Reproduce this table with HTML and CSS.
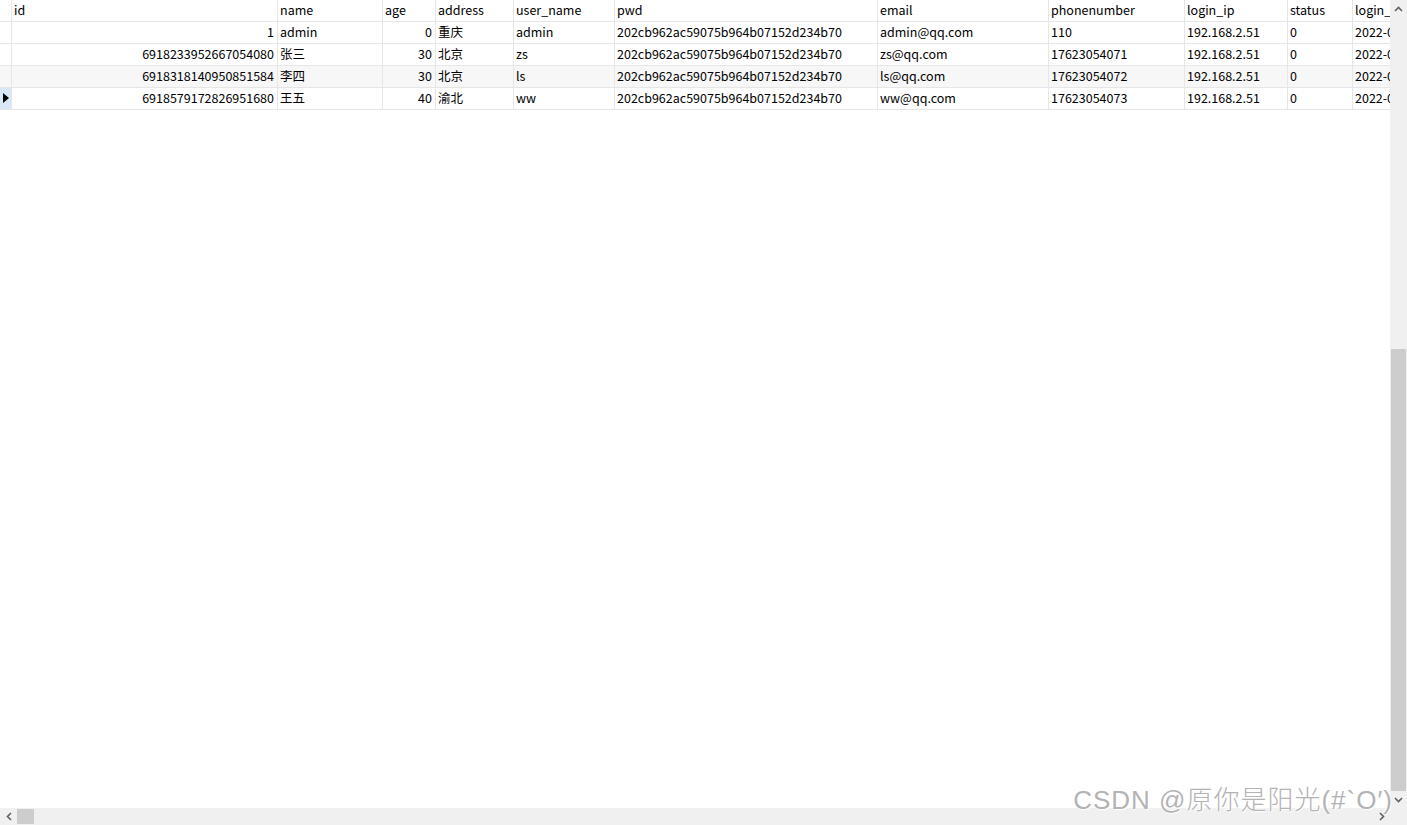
FILE: index.html
```html
<!DOCTYPE html>
<html>
<head>
<meta charset="utf-8">
<link rel="stylesheet" href="styles.css">
</head>
<body>
<div class="window">
  <div class="grid">
    <div class="row head">
      <div class="c ind"></div>
      <div class="c id">id</div>
      <div class="c name">name</div>
      <div class="c age">age</div>
      <div class="c addr">address</div>
      <div class="c uname">user_name</div>
      <div class="c pwd">pwd</div>
      <div class="c email">email</div>
      <div class="c phone">phonenumber</div>
      <div class="c ip">login_ip</div>
      <div class="c status">status</div>
      <div class="c last">login_</div>
    </div>
    <div class="row">
      <div class="c ind"></div>
      <div class="c id num">1</div>
      <div class="c name">admin</div>
      <div class="c age num">0</div>
      <div class="c addr">重庆</div>
      <div class="c uname">admin</div>
      <div class="c pwd">202cb962ac59075b964b07152d234b70</div>
      <div class="c email">admin@qq.com</div>
      <div class="c phone">110</div>
      <div class="c ip">192.168.2.51</div>
      <div class="c status">0</div>
      <div class="c last">2022-0</div>
    </div>
    <div class="row">
      <div class="c ind"></div>
      <div class="c id num">6918233952667054080</div>
      <div class="c name">张三</div>
      <div class="c age num">30</div>
      <div class="c addr">北京</div>
      <div class="c uname">zs</div>
      <div class="c pwd">202cb962ac59075b964b07152d234b70</div>
      <div class="c email">zs@qq.com</div>
      <div class="c phone">17623054071</div>
      <div class="c ip">192.168.2.51</div>
      <div class="c status">0</div>
      <div class="c last">2022-0</div>
    </div>
    <div class="row alt">
      <div class="c ind"></div>
      <div class="c id num">6918318140950851584</div>
      <div class="c name">李四</div>
      <div class="c age num">30</div>
      <div class="c addr">北京</div>
      <div class="c uname">ls</div>
      <div class="c pwd">202cb962ac59075b964b07152d234b70</div>
      <div class="c email">ls@qq.com</div>
      <div class="c phone">17623054072</div>
      <div class="c ip">192.168.2.51</div>
      <div class="c status">0</div>
      <div class="c last">2022-0</div>
    </div>
    <div class="row">
      <div class="c ind cur"><span class="tri"></span></div>
      <div class="c id num">6918579172826951680</div>
      <div class="c name">王五</div>
      <div class="c age num">40</div>
      <div class="c addr">渝北</div>
      <div class="c uname">ww</div>
      <div class="c pwd">202cb962ac59075b964b07152d234b70</div>
      <div class="c email">ww@qq.com</div>
      <div class="c phone">17623054073</div>
      <div class="c ip">192.168.2.51</div>
      <div class="c status">0</div>
      <div class="c last">2022-0</div>
    </div>
  </div>
  <div class="vscroll">
    <div class="arrow up"><svg width="9" height="6" viewBox="0 0 9 6"><path d="M1 5 L4.5 1.5 L8 5" fill="none" stroke="#606060" stroke-width="1.6"/></svg></div>
    <div class="vtrack"><div class="vthumb"></div></div>
    <div class="arrow down"><svg width="9" height="6" viewBox="0 0 9 6"><path d="M1 1 L4.5 4.5 L8 1" fill="none" stroke="#606060" stroke-width="1.6"/></svg></div>
  </div>
  <div class="hscroll">
    <div class="arrow left"><svg width="6" height="9" viewBox="0 0 6 9"><path d="M5 1 L1.5 4.5 L5 8" fill="none" stroke="#606060" stroke-width="1.6"/></svg></div>
    <div class="hthumb"></div>
    <div class="htrack"></div>
    <div class="arrow right"><svg width="6" height="9" viewBox="0 0 6 9"><path d="M1 1 L4.5 4.5 L1 8" fill="none" stroke="#606060" stroke-width="1.6"/></svg></div>
  </div>
  <div class="corner"></div>
  <div class="watermark">CSDN @原你是阳光(#`O′)</div>
</div>
</body>
</html>
```
FILE: styles.css
```css
html, body {
  margin: 0;
  padding: 0;
  background: #ffffff;
}
.window {
  position: relative;
  width: 1407px;
  height: 825px;
  display: grid;
  grid-template-columns: 1390px 17px;
  grid-template-rows: 808px 17px;
  overflow: hidden;
  font-family: "Noto Sans CJK SC", "Microsoft YaHei", sans-serif;
  font-size: 12.5px;
  color: #000;
}
.grid {
  overflow: hidden;
  background: #fff;
}
.row {
  display: flex;
  height: 22px;
  border-bottom: 1px solid #e6e6e6;
  box-sizing: border-box;
  white-space: nowrap;
}
.row.alt {
  background: #f7f7f7;
}
.c {
  flex: none;
  box-sizing: border-box;
  border-right: 1px solid #e6e6e6;
  padding: 0 2px;
  line-height: 20px;
  overflow: hidden;
}
.num {
  text-align: right;
  padding-right: 3px;
}
.ind { width: 12px; padding: 0; position: relative; }
.ind.cur { background: #d9e8f6; }
.tri {
  position: absolute;
  left: 3px;
  top: 5px;
  width: 0;
  height: 0;
  border-top: 5px solid transparent;
  border-bottom: 5px solid transparent;
  border-left: 6px solid #000;
}
.id { width: 266px; }
.name { width: 105px; }
.age { width: 53px; }
.addr { width: 78px; }
.uname { width: 101px; }
.pwd { width: 263px; }
.email { width: 171px; }
.phone { width: 136px; }
.ip { width: 103px; }
.status { width: 65px; }
.last { width: 38px; border-right: none; padding-right: 0; }
.vscroll {
  display: flex;
  flex-direction: column;
  background: #f0f0f0;
}
.vtrack {
  flex: 1;
  display: flex;
  flex-direction: column;
  justify-content: flex-end;
}
.vthumb {
  height: 442px;
  margin: 0 1px;
  background: #cdcdcd;
}
.arrow {
  flex: none;
  width: 17px;
  height: 17px;
  display: flex;
  align-items: center;
  justify-content: center;
}
.hscroll {
  display: flex;
  background: #f0f0f0;
}
.hthumb {
  width: 17px;
  margin: 1px 0;
  background: #cdcdcd;
}
.htrack { flex: 1; }
.corner { background: #f0f0f0; }
.watermark {
  position: absolute;
  right: 14px;
  top: 783px;
  font-size: 26px;
  letter-spacing: 1px;
  line-height: 34px;
  color: #b3b3b3;
  text-shadow: 1px 1px 1px #ffffff, -1px -1px 1px #ffffff;
  font-family: "Liberation Sans", "Noto Sans CJK SC", sans-serif;
  font-weight: 300;
  white-space: nowrap;
}
```
